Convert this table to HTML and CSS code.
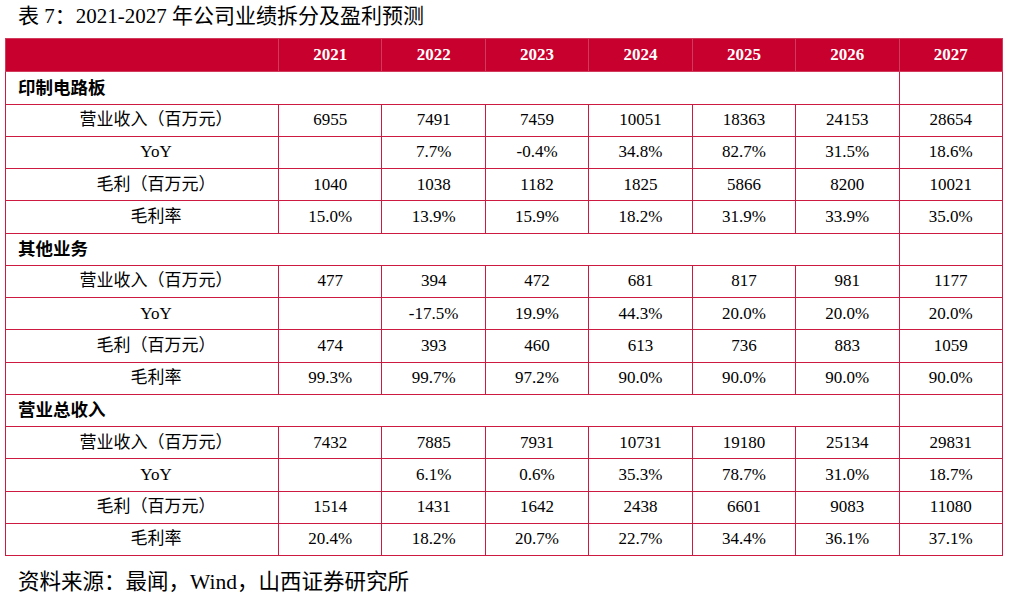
FILE: index.html
```html
<!DOCTYPE html>
<html lang="zh-CN">
<head>
<meta charset="utf-8">
<title>表 7</title>
<link rel="stylesheet" href="styles.css">
</head>
<body>
<div class="page">
  <h1 class="title">表 7：2021-2027 年公司业绩拆分及盈利预测</h1>
  <table class="data">
    <colgroup>
      <col class="c-label">
      <col><col><col><col><col><col><col>
    </colgroup>
    <thead>
      <tr>
        <th></th><th>2021</th><th>2022</th><th>2023</th><th>2024</th><th>2025</th><th>2026</th><th>2027</th>
      </tr>
    </thead>
    <tbody>
      <tr class="section"><td colspan="7">印制电路板</td><td></td></tr>
      <tr><td class="label">营业收入（百万元）</td><td>6955</td><td>7491</td><td>7459</td><td>10051</td><td>18363</td><td>24153</td><td>28654</td></tr>
      <tr><td class="label">YoY</td><td></td><td>7.7%</td><td>-0.4%</td><td>34.8%</td><td>82.7%</td><td>31.5%</td><td>18.6%</td></tr>
      <tr><td class="label">毛利（百万元）</td><td>1040</td><td>1038</td><td>1182</td><td>1825</td><td>5866</td><td>8200</td><td>10021</td></tr>
      <tr><td class="label">毛利率</td><td>15.0%</td><td>13.9%</td><td>15.9%</td><td>18.2%</td><td>31.9%</td><td>33.9%</td><td>35.0%</td></tr>
      <tr class="section"><td colspan="7">其他业务</td><td></td></tr>
      <tr><td class="label">营业收入（百万元）</td><td>477</td><td>394</td><td>472</td><td>681</td><td>817</td><td>981</td><td>1177</td></tr>
      <tr><td class="label">YoY</td><td></td><td>-17.5%</td><td>19.9%</td><td>44.3%</td><td>20.0%</td><td>20.0%</td><td>20.0%</td></tr>
      <tr><td class="label">毛利（百万元）</td><td>474</td><td>393</td><td>460</td><td>613</td><td>736</td><td>883</td><td>1059</td></tr>
      <tr><td class="label">毛利率</td><td>99.3%</td><td>99.7%</td><td>97.2%</td><td>90.0%</td><td>90.0%</td><td>90.0%</td><td>90.0%</td></tr>
      <tr class="section"><td colspan="7">营业总收入</td><td></td></tr>
      <tr><td class="label">营业收入（百万元）</td><td>7432</td><td>7885</td><td>7931</td><td>10731</td><td>19180</td><td>25134</td><td>29831</td></tr>
      <tr><td class="label">YoY</td><td></td><td>6.1%</td><td>0.6%</td><td>35.3%</td><td>78.7%</td><td>31.0%</td><td>18.7%</td></tr>
      <tr><td class="label">毛利（百万元）</td><td>1514</td><td>1431</td><td>1642</td><td>2438</td><td>6601</td><td>9083</td><td>11080</td></tr>
      <tr><td class="label">毛利率</td><td>20.4%</td><td>18.2%</td><td>20.7%</td><td>22.7%</td><td>34.4%</td><td>36.1%</td><td>37.1%</td></tr>
    </tbody>
  </table>
  <p class="source">资料来源：最闻，Wind，山西证券研究所</p>
</div>
</body>
</html>
```

FILE: styles.css
```css
html, body {
  margin: 0;
  padding: 0;
  background: #ffffff;
}

.page {
  width: 1009px;
  padding: 0 0 0 5px;
  box-sizing: border-box;
  font-family: "Liberation Serif", "Noto Sans CJK SC", serif;
  color: #000000;
}

.title {
  margin: 0;
  padding: 3px 0 0 13px;
  height: 38px;
  box-sizing: border-box;
  font-size: 21px;
  font-weight: normal;
  line-height: 26px;
}

.data {
  width: 998px;
  table-layout: fixed;
  border-collapse: collapse;
  font-size: 17px;
}

.data .c-label {
  width: 273px;
}

.data th,
.data td {
  border: 1px solid #cc1a40;
  padding: 0;
  text-align: center;
  vertical-align: middle;
  line-height: 20px;
  white-space: nowrap;
}

.data thead th {
  background: #c8002d;
  color: #ffffff;
  font-weight: bold;
  height: 32px;
  border-color: #d23a5c;
}

.data tbody td {
  height: 31px;
}

.data tbody tr:nth-child(odd) td {
  height: 31.5px;
}

.data td.label {
  padding-left: 28px;
}

.data .section td:first-child {
  text-align: left;
  padding-left: 12px;
  font-weight: bold;
  font-size: 17.5px;
}

.source {
  margin: 12px 0 0 0;
  padding-left: 13px;
  font-size: 21.5px;
  line-height: 28px;
}
```
